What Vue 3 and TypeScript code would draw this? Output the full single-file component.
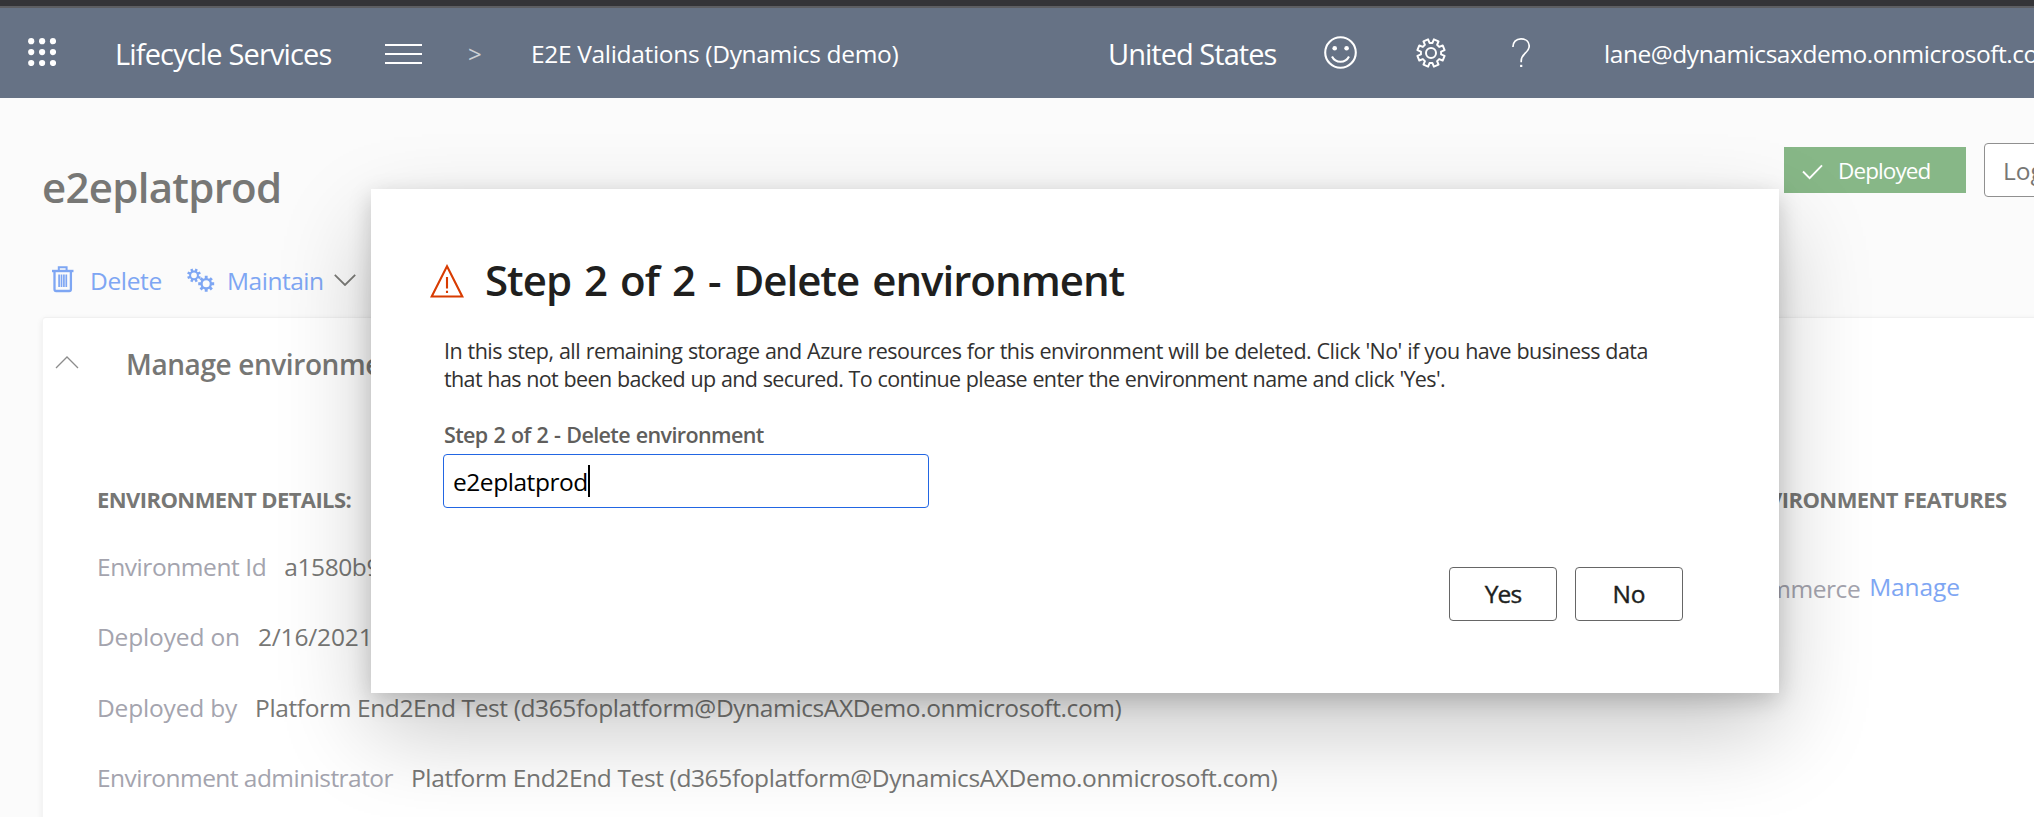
<script setup lang="ts">
interface Detail {
  label: string
  value: string
  labelTracking: number
  valueTracking: number
}

const details: Detail[] = [
  { label: 'Environment Id', value: 'a1580b97', labelTracking: -0.43, valueTracking: -0.4 },
  { label: 'Deployed on', value: '2/16/2021', labelTracking: -0.157, valueTracking: -0.15 },
  {
    label: 'Deployed by',
    value: 'Platform End2End Test (d365foplatform@DynamicsAXDemo.onmicrosoft.com)',
    labelTracking: -0.182,
    valueTracking: -0.382,
  },
  {
    label: 'Environment administrator',
    value: 'Platform End2End Test (d365foplatform@DynamicsAXDemo.onmicrosoft.com)',
    labelTracking: -0.545,
    valueTracking: -0.382,
  },
]

const dots = [0, 1, 2, 3, 4, 5, 6, 7, 8].map((i) => ({
  x: 3.2 + (i % 3) * 10.9,
  y: 3.2 + Math.floor(i / 3) * 10.9,
}))

// Outline of a cog with eight teeth; the first tooth is turned by `turn` radians.
function cog(cx: number, cy: number, outer: number, inner: number, turn: number): string {
  const step = Math.PI / 4
  const points: string[] = []
  for (let i = 0; i < 8; i++) {
    const a = i * step + turn
    for (const [r, d] of [
      [inner, -0.25],
      [outer, -0.18],
      [outer, 0.18],
      [inner, 0.25],
    ]) {
      points.push(`${(cx + r * Math.cos(a + d)).toFixed(2)} ${(cy + r * Math.sin(a + d)).toFixed(2)}`)
    }
  }
  return `M${points.join('L')}Z`
}

const settingsCog = cog(15, 15, 13.9, 10.2, Math.PI / 8)
const smallCog = cog(7, 7.3, 7, 4.9, Math.PI / 8)
const largeCog = cog(19.2, 15.8, 8.1, 5.8, 0)
</script>

<template>
  <div class="screen">
    <div class="browser-edge"></div>
    <header class="topbar">
      <svg class="waffle" width="28" height="28" viewBox="0 0 28 28">
        <circle v-for="(d, i) in dots" :key="i" :cx="d.x" :cy="d.y" r="3.1" fill="#fff" />
      </svg>
      <span class="brand">Lifecycle Services</span>
      <div class="burger"><i></i><i></i><i></i></div>
      <span class="crumb-sep">&gt;</span>
      <span class="crumb">E2E Validations (Dynamics demo)</span>
      <span class="region">United States</span>
      <svg class="smile" width="33" height="33" viewBox="0 0 33 33" fill="none" stroke="#fff" stroke-width="2.1">
        <circle cx="16.5" cy="16.5" r="15.3" />
        <path d="M8 20.500c3.600 7 13.400 7 17 0" />
        <circle cx="10.700" cy="12.300" r="2.300" fill="#fff" stroke="none" />
        <circle cx="22.600" cy="12.300" r="2.300" fill="#fff" stroke="none" />
      </svg>
      <svg class="settings" width="30" height="30" viewBox="0 0 30 30" fill="none" stroke="#fff" stroke-width="2" stroke-linejoin="round">
        <path :d="settingsCog" />
        <circle cx="15" cy="15" r="5" />
      </svg>
      <svg class="help" width="18" height="30" viewBox="0 0 18 30" fill="none" stroke="#fff" stroke-width="1.700">
        <path d="M.9 9C.9 4.200 4 .9 9 .9s8.200 3 8.200 7.400c0 3.700-2.200 5.300-4.600 7.500-2.300 2.100-3.400 3.800-3.400 7.200v1.200" />
        <path d="M9.200 26.800v2.200" stroke-width="2.200" />
      </svg>
      <span class="account">lane@dynamicsaxdemo.onmicrosoft.com</span>
    </header>

    <main class="page">
      <div class="title-row">
        <h1>e2eplatprod</h1>
        <div class="status">
          <svg width="21" height="16" viewBox="0 0 21 16" fill="none" stroke="#fff" stroke-width="1.900">
            <path d="M1 7.500l6.600 6.600L20 1.300" />
          </svg>
          <span>Deployed</span>
        </div>
        <button class="login">Log on</button>
      </div>

      <div class="toolbar">
        <svg class="trash" width="22" height="27" viewBox="0 0 22 27" fill="none" stroke="#7ea6f3">
          <path d="M0 5h21.500" stroke-width="2.400" />
          <path d="M6.800 4.500V1.300h7.800v3.200" stroke-width="2" />
          <path d="M2.500 5v18.300q0 1.700 1.700 1.700h13q1.700 0 1.700-1.700V5" stroke-width="2.300" />
          <path d="M7.100 8.500v12.500M9.500 8.500v12.500M11.900 8.500v12.500M14.300 8.500v12.500" stroke-width="1.700" />
        </svg>
        <span class="delete">Delete</span>
        <svg class="cogs" width="28" height="24" viewBox="0 0 28 24" fill="#7ea6f3" fill-rule="evenodd">
          <path :d="smallCog + 'M9.900 7.300a2.900 2.900 0 1 0-5.800 0a2.900 2.900 0 1 0 5.800 0Z'" />
          <path :d="largeCog + 'M22.700 15.800a3.500 3.500 0 1 0-7 0a3.500 3.500 0 1 0 7 0Z'" />
        </svg>
        <span class="maintain">Maintain</span>
        <svg class="chevron" width="22" height="12" viewBox="0 0 22 12" fill="none" stroke="#7b7b77" stroke-width="1.800">
          <path d="M.8.8L11 11 21.200.8" />
        </svg>
      </div>

      <section class="card">
        <div class="card-head">
          <svg width="24" height="13" viewBox="0 0 24 13" fill="none" stroke="#8c8c8c" stroke-width="1.300">
            <path d="M1 12L12 1l11 11" />
          </svg>
          <h2>Manage environment</h2>
        </div>
        <div class="columns">
          <div class="details">
            <h3>ENVIRONMENT DETAILS:</h3>
            <div v-for="d in details" :key="d.label" class="detail">
              <span class="label" :style="{ letterSpacing: d.labelTracking + 'px' }">{{ d.label }}</span>
              <span class="value" :style="{ letterSpacing: d.valueTracking + 'px' }">{{ d.value }}</span>
            </div>
          </div>
          <div class="features">
            <h3>ENVIRONMENT FEATURES</h3>
            <div class="feature">
              <span class="label">Commerce</span>
              <a class="manage">Manage</a>
            </div>
          </div>
        </div>
      </section>
    </main>

    <div class="dialog" role="dialog">
      <div class="dialog-head">
        <svg width="34" height="34" viewBox="0 0 34 34" fill="none" stroke="#d83b01" stroke-width="2.100">
          <path d="M17 2.300L32.300 32.500H1.700Z" />
          <path d="M17 13v11.500M17 26.700v2.200" />
        </svg>
        <h2>Step 2 of 2 - Delete environment</h2>
      </div>
      <p class="message">
        <span class="line-a">In this step, all remaining storage and Azure resources for this environment will be deleted. Click 'No' if you have business data</span>
        <span class="line-b">that has not been backed up and secured. To continue please enter the environment name and click 'Yes'.</span>
      </p>
      <div class="field-label">Step 2 of 2 - Delete environment</div>
      <div class="field"><span>e2eplatprod</span><i class="caret"></i></div>
      <div class="actions">
        <button class="yes">Yes</button>
        <button class="no">No</button>
      </div>
    </div>
  </div>
</template>

<style>
html,
body {
  margin: 0;
  overflow: hidden;
}
</style>

<style scoped>
.screen {
  position: relative;
  width: 2034px;
  height: 817px;
  overflow: hidden;
  display: flex;
  flex-direction: column;
  background: #fbfbfb;
  font-family: 'Open Sans', 'Noto Sans', sans-serif;
  font-size: 24.5px;
  color: #777775;
  white-space: nowrap;
}
h1,
h2,
h3,
p {
  margin: 0;
}
svg,
span {
  flex: none;
}
.browser-edge {
  box-sizing: border-box;
  flex: none;
  height: 8px;
  background: #343438;
  border-bottom: 2px solid #5d5e62;
}
.topbar {
  flex: none;
  height: 90px;
  display: flex;
  align-items: center;
  padding-left: 28px;
  background: #667285;
  color: #fff;
  overflow: hidden;
}
.waffle {
  margin-bottom: 2px;
}
.brand {
  width: 229px;
  margin: 1px 0 0 59px;
  font-size: 29px;
  letter-spacing: -0.851px;
}
.burger {
  flex: none;
  width: 37px;
  margin: 2px 0 0 41px;
  display: flex;
  flex-direction: column;
  gap: 7px;
}
.burger i {
  height: 2px;
  background: #fff;
}
.crumb-sep {
  width: 20px;
  margin: 1px 0 0 46px;
  font-size: 24px;
  color: #cdd0d4;
}
.crumb {
  width: 380px;
  margin-left: 43px;
  letter-spacing: -0.325px;
}
.region {
  width: 179px;
  margin: 1px 0 0 197px;
  font-size: 29px;
  letter-spacing: -0.968px;
}
.smile {
  margin: 0 0 2px 37px;
}
.settings {
  margin: 0 0 1px 59px;
}
.help {
  margin: 0 0 1px 66px;
}
.account {
  margin-left: 74px;
  letter-spacing: -0.451px;
}
.page {
  flex: 1;
  padding-top: 45px;
}
.title-row {
  display: flex;
  align-items: flex-start;
  height: 73px;
  padding-left: 42px;
}
h1 {
  flex: none;
  width: 1742px;
  margin-top: 14px;
  font-size: 42px;
  line-height: 60px;
  font-weight: 600;
  letter-spacing: -0.716px;
}
.status {
  box-sizing: border-box;
  flex: none;
  display: flex;
  align-items: center;
  gap: 15px;
  width: 182px;
  height: 46px;
  margin-top: 4px;
  padding-left: 18px;
  background: #87b787;
  color: #fff;
  font-size: 22.5px;
  letter-spacing: -0.9px;
}
.status svg {
  margin-top: 3px;
}
button {
  box-sizing: border-box;
  flex: none;
  height: 54px;
  padding: 0;
  border: 1px solid #666;
  border-radius: 4px;
  background: #fff;
  font: inherit;
}
.login {
  width: 110px;
  margin-left: 18px;
  padding-left: 18px;
  border-color: #909090;
  color: #777775;
  text-align: left;
}
.toolbar {
  display: flex;
  align-items: center;
  height: 40px;
  margin-top: 44px;
  padding-left: 52px;
  color: #7ea6f3;
}
.trash {
  margin-bottom: 2px;
}
.delete {
  width: 80px;
  margin-left: 16px;
  letter-spacing: -0.342px;
}
.cogs {
  margin: 0 0 1px 17px;
}
.maintain {
  width: 98px;
  margin-left: 12px;
  letter-spacing: -0.484px;
}
.chevron {
  margin-left: 9px;
}
.card {
  box-sizing: border-box;
  width: 2020px;
  height: 560px;
  margin: 17px 0 0 42px;
  padding-top: 26px;
  border: 1px solid #f0f0f0;
  border-left-color: #f4f4f4;
  border-radius: 4px;
  background: #fff;
  box-shadow: 0 2px 6px rgba(0, 0, 0, 0.07);
}
.card-head {
  display: flex;
  align-items: center;
  height: 40px;
  padding-left: 12px;
}
.card-head svg {
  margin-bottom: 3px;
}
.card-head h2 {
  margin-left: 47px;
  font-size: 28px;
  line-height: 40px;
  font-weight: 600;
  letter-spacing: -0.403px;
}
.columns {
  display: grid;
  grid-template-columns: 1642px auto;
  margin: 100px 0 0 54px;
}
h3 {
  font-size: 22px;
  line-height: 30px;
  font-weight: 700;
  letter-spacing: -0.577px;
}
.details h3 {
  margin-bottom: 17.4px;
}
.detail {
  display: flex;
  align-items: center;
  gap: 18px;
  height: 70.3px;
}
.label {
  color: #a4a4ae;
}
.features h3 {
  letter-spacing: -0.58px;
}
.feature {
  display: flex;
  align-items: center;
  gap: 9px;
  height: 40px;
  margin-top: 54px;
}
.feature .label {
  letter-spacing: -0.45px;
}
.manage {
  padding-bottom: 3px;
  color: #7ea6f3;
  letter-spacing: -0.118px;
}
.dialog {
  position: absolute;
  left: 371px;
  top: 189px;
  box-sizing: border-box;
  width: 1408px;
  height: 504px;
  padding: 61px 96px 0 72px;
  background: #fff;
  color: #323130;
  box-shadow:
    0 38px 86px rgba(0, 0, 0, 0.22),
    0 7px 22px rgba(0, 0, 0, 0.18);
}
.dialog-head {
  display: flex;
  align-items: center;
  gap: 21px;
  height: 60px;
  margin-left: -13px;
}
.dialog-head svg {
  margin-top: 1px;
}
.dialog-head h2 {
  font-size: 42px;
  line-height: 60px;
  font-weight: 600;
  letter-spacing: -1px;
  word-spacing: 3.1px;
  color: #201f1e;
}
.message {
  display: flex;
  flex-direction: column;
  margin-top: 27px;
  padding-left: 1px;
  font-size: 21.5px;
  line-height: 28px;
}
.line-a {
  letter-spacing: -0.54px;
  word-spacing: 0.45px;
}
.line-b {
  letter-spacing: -0.62px;
  word-spacing: 0.4px;
}
.field-label {
  margin: 28px 0 5px 1px;
  font-size: 21.5px;
  line-height: 28px;
  font-weight: 600;
  letter-spacing: -0.62px;
  word-spacing: 0.9px;
  color: #605e5c;
}
.field {
  box-sizing: border-box;
  display: flex;
  align-items: center;
  width: 486px;
  height: 54px;
  padding-left: 9px;
  border: 1px solid #2266e3;
  border-radius: 4px;
  color: #000;
  letter-spacing: -0.45px;
}
.caret {
  width: 2px;
  height: 32px;
  background: #000;
}
.actions {
  display: flex;
  justify-content: flex-end;
  gap: 18px;
  margin-top: 59px;
}
.actions button {
  width: 108px;
  padding-bottom: 2px;
  color: #201f1e;
  -webkit-text-stroke: 0.4px #201f1e;
}
.yes {
  letter-spacing: -0.9px;
}
</style>
